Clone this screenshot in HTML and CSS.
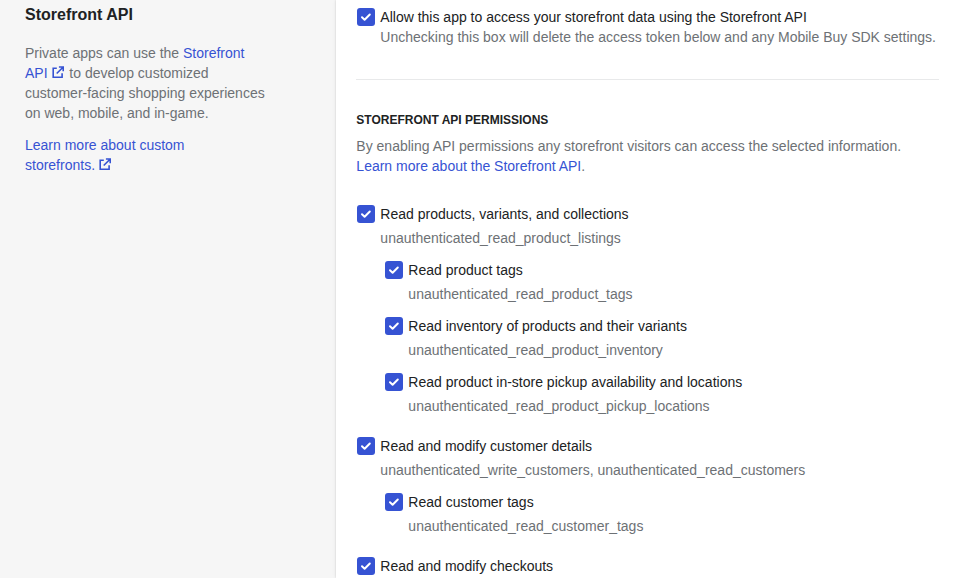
FILE: index.html
```html
<!DOCTYPE html>
<html lang="en">
<head>
<meta charset="utf-8">
<title>Storefront API</title>
<link rel="stylesheet" href="styles.css">
</head>
<body>
<svg class="sprite" aria-hidden="true">
  <symbol id="check" viewBox="0 0 18 18"><path d="M5 9.2 7.6 11.7 12.8 6.5" fill="none" stroke="#fff" stroke-width="2" stroke-linecap="round" stroke-linejoin="round"/></symbol>
  <symbol id="external" viewBox="0 0 12 12"><path d="M4.8 2.3H1.2v8.9h8.9V7.3M6.9 1h4.3v4.3M11 1.2 4.7 7.5" fill="none" stroke="currentColor" stroke-width="1.6"/></symbol>
</svg>
<div class="layout">
  <aside class="annotation">
    <h2>Storefront API</h2>
    <p>Private apps can use the <a>Storefront <span class="keep">API <svg class="external"><use href="#external"/></svg></span></a> to develop customized customer-facing shopping experiences on web, mobile, and in-game.</p>
    <p><a>Learn more about custom <span class="keep">storefronts. <svg class="external"><use href="#external"/></svg></span></a></p>
  </aside>
  <main class="card">
    <div class="option access">
      <svg class="box"><use href="#check"/></svg>
      <div><div class="label">Allow this app to access your storefront data using the Storefront API</div><div class="help">Unchecking this box will delete the access token below and any Mobile Buy SDK settings.</div></div>
    </div>
    <section class="permissions">
      <h3>Storefront API permissions</h3>
      <p class="intro">By enabling API permissions any storefront visitors can access the selected information. <a>Learn more about the Storefront API</a>.</p>
      <div class="group">
        <div class="option"><svg class="box"><use href="#check"/></svg><div><div class="label">Read products, variants, and collections</div><div class="scope">unauthenticated_read_product_listings</div></div></div>
        <div class="option child"><svg class="box"><use href="#check"/></svg><div><div class="label">Read product tags</div><div class="scope">unauthenticated_read_product_tags</div></div></div>
        <div class="option child"><svg class="box"><use href="#check"/></svg><div><div class="label">Read inventory of products and their variants</div><div class="scope">unauthenticated_read_product_inventory</div></div></div>
        <div class="option child"><svg class="box"><use href="#check"/></svg><div><div class="label">Read product in-store pickup availability and locations</div><div class="scope">unauthenticated_read_product_pickup_locations</div></div></div>
      </div>
      <div class="group">
        <div class="option"><svg class="box"><use href="#check"/></svg><div><div class="label">Read and modify customer details</div><div class="scope">unauthenticated_write_customers, unauthenticated_read_customers</div></div></div>
        <div class="option child"><svg class="box"><use href="#check"/></svg><div><div class="label">Read customer tags</div><div class="scope">unauthenticated_read_customer_tags</div></div></div>
      </div>
      <div class="group">
        <div class="option"><svg class="box"><use href="#check"/></svg><div><div class="label">Read and modify checkouts</div></div></div>
      </div>
    </section>
  </main>
</div>
</body>
</html>
```
FILE: styles.css
```css
* { box-sizing: border-box; }
body {
  margin: 0;
  height: 578px;
  overflow: hidden;
  background: #f6f6f6;
  color: #202223;
  font: 14px/20px "Liberation Sans", Arial, sans-serif;
}
h2, h3, p { margin: 0; }
a { color: #3653d3; }
.sprite { display: none; }
.layout { display: flex; height: 578px; }
.annotation {
  width: 336px;
  flex: none;
  padding: 3px 66px 0 25px;
  color: #6d7175;
}
.annotation h2 {
  margin-bottom: 16px;
  color: #202223;
  font-size: 16px;
  line-height: 24px;
}
.annotation p { margin-bottom: 12px; }
.keep { white-space: nowrap; }
.external {
  width: 12px;
  height: 12px;
  margin: 0 1.7px 0 .3px;
  vertical-align: 0;
}
.card {
  flex: 1;
  padding: 7px 14px 0 20.35px;
  background: #fff;
  box-shadow: 0 0 5px rgba(0, 0, 0, .05), 0 0 2px rgba(0, 0, 0, .15);
}
.option { display: flex; gap: 5px; padding-left: 1px; }
.box {
  width: 18px;
  height: 18px;
  margin-top: 1px;
  flex: none;
  border-radius: 3px;
  background: #3653d3;
}
.help, .scope, .intro { color: #6d7175; }
.help { white-space: nowrap; }
.access { padding-bottom: 32px; }
.permissions { padding-top: 30px; border-top: 1px solid #e8e9ea; }
.permissions h3 {
  margin-bottom: 6px;
  font-size: 12px;
  line-height: 20px;
  text-transform: uppercase;
}
.intro { margin-bottom: 28px; }
.group { display: grid; gap: 12px; margin-bottom: 20px; }
.scope { margin-top: 4px; }
.child { padding-left: 29px; }
```
